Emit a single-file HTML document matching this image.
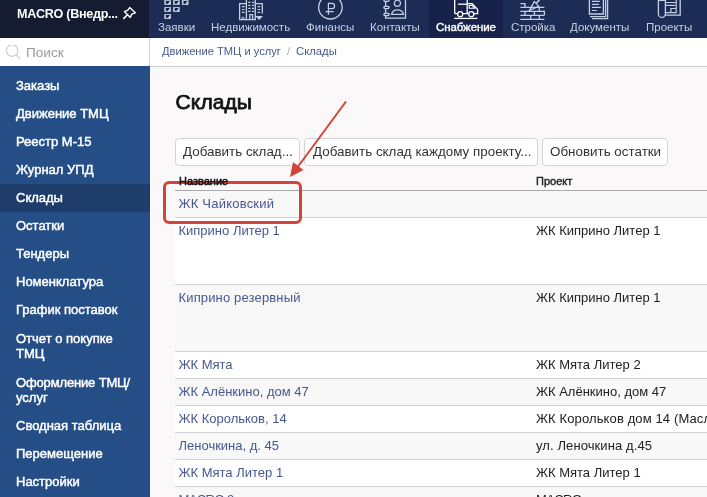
<!DOCTYPE html>
<html><head><meta charset="utf-8">
<style>
*{box-sizing:border-box;margin:0;padding:0}
html,body{width:707px;height:497px;overflow:hidden;background:#faf8f9;font-family:"Liberation Sans",sans-serif}
.abs{position:absolute;white-space:nowrap}
#tl{left:0;top:0;width:149px;height:38px;background:#151b30}
#nav{left:149px;top:0;width:558px;height:38px;background:#1c2c55}
#navact{left:429px;top:0;width:74px;height:38px;background:#17224a}
.nl{font-size:11.5px;color:#c6d0e2;top:19.7px;line-height:14px}
#search{left:0;top:38px;width:149px;height:28px;background:#fff}
#vline{left:149px;top:38px;width:1px;height:28px;background:#d2d2d2}
#bc{left:150px;top:38px;width:557px;height:28px;background:#fff}
#bcline{left:150px;top:66px;width:557px;height:1px;background:#d0d0d0}
#side{left:0;top:66px;width:150px;height:431px;background:#254e86}
#sideact{left:0;top:184px;width:150px;height:28px;background:#1f3d6b}
.si{left:16px;font-size:13px;color:#fff;-webkit-text-stroke:0.45px #fff;line-height:16px}
.btn{position:absolute;top:138px;height:28px;border:1px solid #d4d4d4;border-radius:4px;background:#fff}
.bt{position:absolute;top:143.7px;font-size:13.4px;color:#333;line-height:16px;white-space:nowrap}
.row{position:absolute;left:175px;width:532px;border-bottom:1px solid #d2d2d2}
.g{background:#f8f8f8}
.w{background:#fff}
.lk{position:absolute;left:178.5px;font-size:13px;color:#475792;white-space:nowrap;line-height:16px}
.pj{position:absolute;left:536px;font-size:13px;color:#222;white-space:nowrap;line-height:16px}
#wrap{position:absolute;left:0;top:0;width:707px;height:497px;overflow:hidden;will-change:transform}
</style></head><body><div id="wrap">
<div id="tl" class="abs"></div>
<div id="nav" class="abs"></div>
<div id="navact" class="abs"></div>
<div class="abs" id="macro" style="left:17px;top:6.5px;font-size:12.6px;letter-spacing:-0.3px;font-weight:bold;color:#fff;line-height:15px">MACRO (Внедр...</div>
<svg class="abs" style="left:0;top:0" width="150" height="37" viewBox="0 0 150 37"><path d="M129.7 7.6 L135.3 12.8 L131.7 14.2 L130.3 17.4 L124.4 11.6 L127.9 10.2 Z" fill="none" stroke="#fff" stroke-width="1.4" stroke-linejoin="round"/><path d="M127.2 15 L123.8 18.4" stroke="#fff" stroke-width="1.6" stroke-linecap="round"/></svg>

<div class="abs nl" id="n1" style="left:158px">Заявки</div>
<div class="abs nl" id="n2" style="left:211px">Недвижимость</div>
<div class="abs nl" id="n3" style="left:306px">Финансы</div>
<div class="abs nl" id="n4" style="left:370px">Контакты</div>
<div class="abs nl" id="n5" style="left:436px;color:#fff;-webkit-text-stroke:0.4px #fff;letter-spacing:-0.1px">Снабжение</div>
<div class="abs nl" id="n6" style="left:511px">Стройка</div>
<div class="abs nl" id="n7" style="left:570px">Документы</div>
<div class="abs nl" id="n8" style="left:646px">Проекты</div>
<svg class="abs" style="left:0;top:0" width="707" height="37" viewBox="0 0 707 37">
<g fill="none" stroke="#c3cfe2" stroke-width="1.3">
<!-- zayavki -->
<g id="sq">
<rect x="164.3" y="0.1" width="6.6" height="4.8" fill="#c3cfe2" stroke="none"/>
<path d="M165.9 1.1 H169.8 L167.9 3.8 H165.9 Z" fill="#101c44" stroke="none"/>
</g>
<use href="#sq" x="8.8" y="0"/><use href="#sq" x="17.6" y="0"/>
<use href="#sq" x="0" y="7"/><use href="#sq" x="8.8" y="7"/>
<use href="#sq" x="0" y="14"/>
<!-- nedvizh -->
<path d="M246.4 19.6 H239.6 V3.7 H246.4"/>
<path d="M246.4 19.6 V-2 H255.3 V19.6 Z"/>
<path d="M255.3 3.7 H262.3 V13.6"/>
<path d="M249.8 19.6 V14.7 H252.6 V19.6"/>
<path d="M241.4 19 V16.8 H244.6 V19" fill="#8c98aa" stroke="none"/>
<path d="M255.2 15.9 H263 L259.1 20 Z" fill="#c3cfe2" stroke="none"/>
<g stroke-width="1.1">
<path d="M242 6.6 h2.6 M242 9.5 h2.6 M242 12.4 h2.6 M248.2 2.4 h2.4 M252 2.4 h2.4 M248.2 5.4 h2.4 M252 5.4 h2.4 M248.2 8.4 h2.4 M252 8.4 h2.4 M248.2 11.4 h2.4 M252 11.4 h2.4 M257.6 6.6 h2.6 M257.6 9.5 h2.6 M257.6 12.4 h2.6"/>
</g>
<!-- finansy -->
<circle cx="330.4" cy="7.2" r="11.8"/>
<path d="M328.4 14.8 V3.4 H332 A2.6 2.6 0 0 1 332 8.6 H328.4 M325.6 11.6 H333.6" stroke-width="1.2"/>
<!-- kontakty -->
<path d="M385.6 -2 V18.2 H405.5 V-2"/>
<ellipse cx="386.5" cy="0.2" rx="2.6" ry="1.3" fill="#1c2c55"/>
<ellipse cx="386.5" cy="7.4" rx="2.6" ry="1.3" fill="#1c2c55"/>
<ellipse cx="386.5" cy="14.4" rx="2.6" ry="1.3" fill="#1c2c55"/>
<circle cx="397.4" cy="3.3" r="3.1"/>
<path d="M391.6 14.4 A6 5.6 0 0 1 403.4 14.4 Z"/>
<!-- stroyka -->
<path d="M520.4 3.7 H525 V7.4 M520.4 7.4 H544.4 M520.4 11.3 H544.4 V15.3 M520.4 15.3 H544.4 M520.4 19.4 H544.4 M539.2 7.4 V11.3 M525 11.3 V15.3 M534.4 11.3 V15.3 M530.7 15.3 V19.4 M539.3 15.3 V19.4"/>
<path d="M529.4 10.4 L534.3 1.6 L538.8 6.2 Z" stroke-width="1.2"/>
<path d="M536.5 3.2 L539.8 -0.8" stroke-width="1.6"/>
<!-- dokumenty -->
<path d="M589.4 -2 V14 H603.4 V-2"/>
<path d="M590 16.6 H605.6 V-2"/>
<path d="M592 18.6 H607.6 V-2"/>
<path d="M591.9 1.4 h7.9 M591.9 4.4 h7.1 M591.9 7.4 h9 M591.9 10.5 h5" stroke-width="1.2"/>
<!-- proekty -->
<path d="M658.4 0.4 H665.4 M658.4 -2 V13.9 A3.5 3.5 0 0 0 665.4 13.9 V-2"/>
<path d="M665.4 15.2 H680.2 V-2"/>
<path d="M665.4 12.7 H676.2 V-2 M665.4 2.5 H676.2 M665.4 5.3 H675 M670.9 12.7 V8.5 H676.2" stroke-width="1.2"/>
</g>
<!-- truck (white) -->
<g fill="none" stroke="#ffffff" stroke-width="1.3">
<path d="M454.7 13.6 V-2 H467.2 V13.6"/>
<path d="M458 4.2 H467.2"/>
<path d="M467.2 3.6 H472.2 L477.6 9.4 V13.6 H474"/>
<path d="M469.2 5.4 H472 L474.8 8.3 H469.2 Z" stroke-width="1.1"/>
<path d="M457.4 13.6 H454.7 M463 13.6 H468.5"/>
<circle cx="460.2" cy="14.2" r="2.5" fill="#17224a"/>
<circle cx="471.3" cy="14.2" r="2.5" fill="#17224a"/>
<path d="M454.2 18.4 H477.4"/>
</g>
</svg>
<div id="search" class="abs"></div>
<div id="vline" class="abs"></div>
<svg class="abs" style="left:5px;top:45px" width="17" height="17" viewBox="0 0 17 17"><circle cx="7.15" cy="5.6" r="5.7" fill="none" stroke="#cdcdcd" stroke-width="1.2"/><path d="M11.2 9.7 L14.8 13.6" stroke="#cdcdcd" stroke-width="1.3" stroke-linecap="round"/></svg>
<div class="abs" id="poisk" style="left:26px;top:45px;font-size:13.6px;color:#9a9a9a;line-height:16px">Поиск</div>
<div id="bc" class="abs"></div>
<div id="bcline" class="abs"></div>
<div class="abs" id="bct1" style="left:162px;top:44px;font-size:11.15px;color:#47598f;line-height:14px">Движение ТМЦ и услуг</div>
<div class="abs" id="bct2" style="left:287px;top:44px;font-size:11.3px;color:#aaa49e;line-height:14px">/</div>
<div class="abs" id="bct3" style="left:296px;top:44px;font-size:11.3px;color:#47598f;line-height:14px">Склады</div>
<div id="side" class="abs"></div>
<div id="sideact" class="abs"></div>
<div class="abs si" id="s1" style="top:78px">Заказы</div>
<div class="abs si" id="s2" style="top:106px">Движение ТМЦ</div>
<div class="abs si" style="top:134px">Реестр М-15</div>
<div class="abs si" style="top:162px">Журнал УПД</div>
<div class="abs si" style="top:190px">Склады</div>
<div class="abs si" style="top:218px">Остатки</div>
<div class="abs si" style="top:246px">Тендеры</div>
<div class="abs si" style="top:274px">Номенклатура</div>
<div class="abs si" style="top:302px">График поставок</div>
<div class="abs si" style="top:331px">Отчет о покупке</div>
<div class="abs si" style="top:346px">ТМЦ</div>
<div class="abs si" style="top:375px;letter-spacing:-0.15px">Оформление ТМЦ/</div>
<div class="abs si" style="top:390px">услуг</div>
<div class="abs si" style="top:418px">Сводная таблица</div>
<div class="abs si" style="top:446px">Перемещение</div>
<div class="abs si" style="top:474px">Настройки</div>

<div class="abs" id="h1" style="left:175.6px;letter-spacing:0.1px;top:89.6px;font-size:21px;-webkit-text-stroke:0.75px #111;color:#111;line-height:24px">Склады</div>

<div class="btn" id="b1" style="left:175px;width:125px"></div>
<div class="btn" id="b2" style="left:304px;width:234px"></div>
<div class="btn" id="b3" style="left:542px;width:126px"></div>
<div class="bt" id="bt1" style="left:183px">Добавить склад...</div>
<div class="bt" id="bt2" style="left:313px">Добавить склад каждому проекту...</div>
<div class="bt" id="bt3" style="left:550px">Обновить остатки</div>

<div class="abs" id="th1" style="left:179px;top:175px;font-size:11px;-webkit-text-stroke:0.5px #111;color:#111;line-height:13px;z-index:5">Название</div>
<div class="abs" id="th2" style="left:536px;top:175px;font-size:11px;-webkit-text-stroke:0.4px #222;color:#222;line-height:13px">Проект</div>
<div class="abs" style="left:175px;top:190px;width:532px;height:1px;background:#aaa"></div>

<div class="row g" style="top:191px;height:27px"></div>
<div class="row w" style="top:218px;height:67px"></div>
<div class="row g" style="top:285px;height:67px"></div>
<div class="row w" style="top:352px;height:27px"></div>
<div class="row g" style="top:379px;height:27px"></div>
<div class="row w" style="top:406px;height:27px"></div>
<div class="row g" style="top:433px;height:27px"></div>
<div class="row w" style="top:460px;height:27px"></div>
<div class="row g" style="top:487px;height:27px"></div>

<div class="lk" id="r1" style="top:196px;letter-spacing:0.22px">ЖК Чайковский</div>
<div class="lk" style="top:223px">Киприно Литер 1</div>
<div class="pj" id="p2" style="top:223px">ЖК Киприно Литер 1</div>
<div class="lk" style="top:290px;letter-spacing:0.15px">Киприно резервный</div>
<div class="pj" style="top:290px">ЖК Киприно Литер 1</div>
<div class="lk" id="r4" style="top:357px">ЖК Мята</div>
<div class="pj" style="top:357px">ЖК Мята Литер 2</div>
<div class="lk" style="top:384px">ЖК Алёнкино, дом 47</div>
<div class="pj" style="top:384px">ЖК Алёнкино, дом 47</div>
<div class="lk" style="top:411px">ЖК Корольков, 14</div>
<div class="pj" style="top:411px;letter-spacing:0.12px">ЖК Корольков дом 14 (Маслова)</div>
<div class="lk" style="top:438px">Леночкина, д. 45</div>
<div class="pj" style="top:438px;letter-spacing:0.1px">ул. Леночкина д.45</div>
<div class="lk" style="top:465px">ЖК Мята Литер 1</div>
<div class="pj" style="top:465px">ЖК Мята Литер 1</div>
<div class="lk" style="top:492px;letter-spacing:-0.6px">MACRO 2</div>
<div class="pj" style="top:492px;letter-spacing:-0.6px">MACRO</div>

<svg class="abs" style="left:0;top:0" width="707" height="497" viewBox="0 0 707 497">
<rect x="164.5" y="182.5" width="136" height="40" rx="4.5" fill="none" stroke="#d3433b" stroke-width="3"/>
<line x1="346" y1="101.5" x2="297" y2="168" stroke="#d3433b" stroke-width="2"/>
<path d="M290 177 L293 162 L303.5 170 Z" fill="#d3433b"/>
</svg>
</div></body></html>
